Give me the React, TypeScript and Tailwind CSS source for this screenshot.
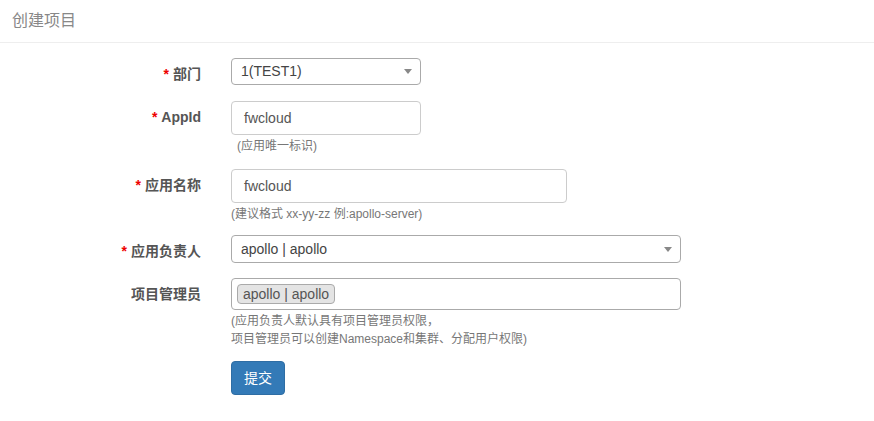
import { ReactNode } from 'react';

const font = { fontFamily: '"Liberation Sans", "Noto Sans CJK SC", sans-serif' };

const Caret = () => (
  <svg width="8" height="5" viewBox="0 0 8 5" className="fill-[#888]">
    <path d="M0 0h8L4 5z" />
  </svg>
);

const Row = ({
  label,
  required,
  children,
  mt,
}: {
  label: string;
  required?: boolean;
  children: ReactNode;
  mt: string;
}) => (
  <div className={`flex ${mt}`}>
    <div className="w-[201px] shrink-0 text-right text-[14px] font-bold text-[#555] pt-[6px] leading-[20px]">
      {required && <span className="text-[#e00] mr-[4px]">*</span>}
      {label}
    </div>
    <div className="ml-[30px]">{children}</div>
  </div>
);

const Help = ({ children }: { children: ReactNode }) => (
  <div className="text-[12px] text-[#777] leading-[18px] mt-[2px]">{children}</div>
);

export default function App() {
  return (
    <div className="min-h-screen bg-white" style={font}>
      <div className="h-[43px] border-b border-[#eee] px-[12px] flex items-center">
        <span className="text-[16px] text-[#888]">创建项目</span>
      </div>

      <Row label="部门" required mt="mt-[15px]">
        <div className="w-[190px] h-[27px] border border-[#aaa] rounded-[4px] flex items-center justify-between pl-[9px] pr-[8px] text-[14px] text-[#444]">
          <span>1(TEST1)</span>
          <Caret />
        </div>
      </Row>

      <Row label="AppId" required mt="mt-[16px]">
        <div className="w-[190px] h-[34px] border border-[#ccc] rounded-[4px] flex items-center pl-[12px] text-[14px] text-[#555]">
          fwcloud
        </div>
        <div className="pl-[6px]">
          <Help>(应用唯一标识)</Help>
        </div>
      </Row>

      <Row label="应用名称" required mt="mt-[14px]">
        <div className="w-[336px] h-[34px] border border-[#ccc] rounded-[4px] flex items-center pl-[12px] text-[14px] text-[#555]">
          fwcloud
        </div>
        <Help>(建议格式 xx-yy-zz 例:apollo-server)</Help>
      </Row>

      <Row label="应用负责人" required mt="mt-[12px]">
        <div className="w-[450px] h-[28px] border border-[#aaa] rounded-[4px] flex items-center justify-between pl-[9px] pr-[8px] text-[14px] text-[#444]">
          <span>apollo | apollo</span>
          <Caret />
        </div>
      </Row>

      <Row label="项目管理员" mt="mt-[15px]">
        <div className="w-[450px] h-[32px] border border-[#aaa] rounded-[4px] flex items-center pl-[5px]">
          <span className="h-[20px] px-[5px] bg-[#e4e4e4] border border-[#aaa] rounded-[4px] text-[14px] text-[#555] leading-[18px]">
            apollo | apollo
          </span>
        </div>
        <Help>
          (应用负责人默认具有项目管理员权限，
          <br />
          项目管理员可以创建Namespace和集群、分配用户权限)
        </Help>
        <button className="mt-[13px] w-[54px] h-[34px] bg-[#337ab7] border border-[#2e6da4] rounded-[4px] text-white text-[14px]">
          提交
        </button>
      </Row>
    </div>
  );
}
